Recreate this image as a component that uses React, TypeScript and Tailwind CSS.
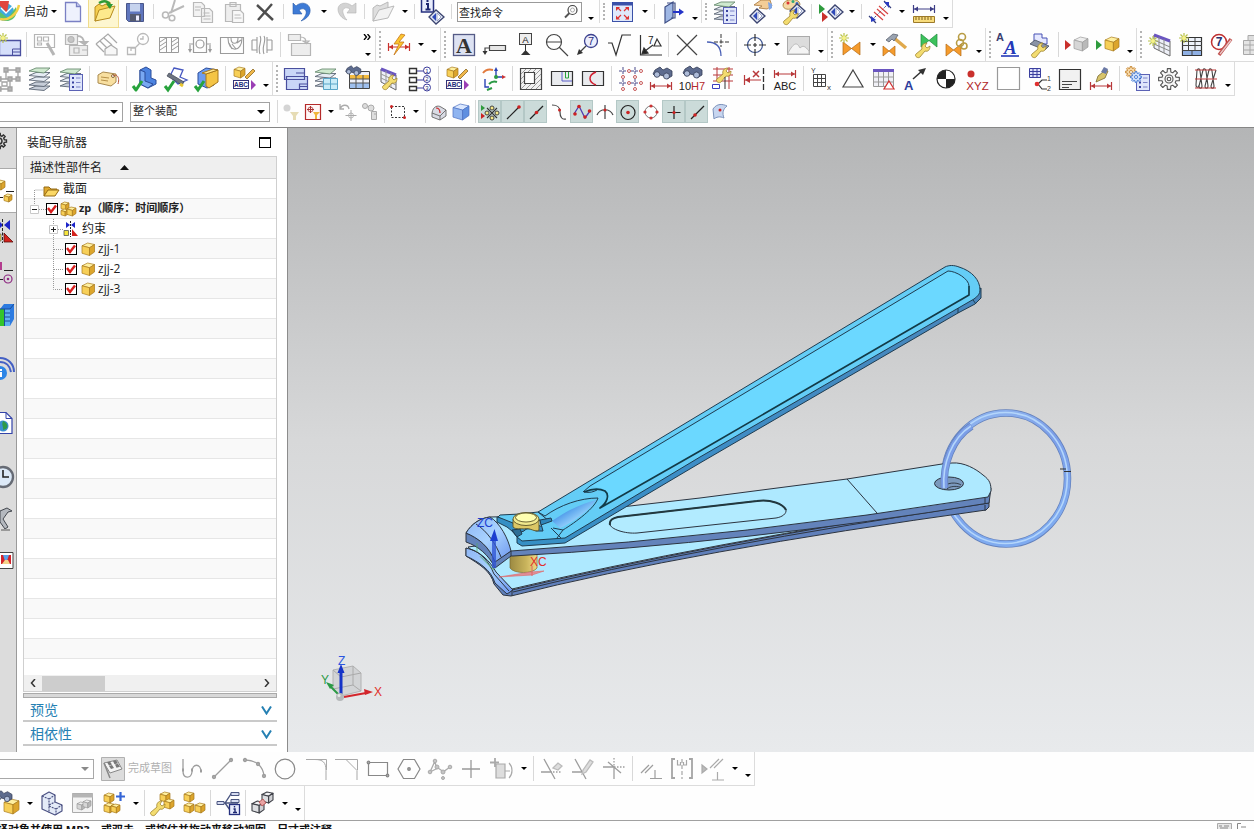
import React from "react";
import type { ReactNode } from "react";

/* ---------- small drawing parts ---------- */

type CubeProps = { x: number; y: number; s: number; tone?: "gold" | "grey" | "blue" | "wire" };
const TONES = {
  gold: ["#fff0a0", "#f7cf57", "#dca52c", "#a77a1c"],
  grey: ["#eeeeee", "#d6d6d6", "#b9b9b9", "#9b9b9b"],
  blue: ["#dbe8ff", "#8fb4f0", "#5f8fe0", "#4a6fc0"],
  wire: ["#f2f2f4", "#dedfe2", "#cfd0d4", "#3f4148"],
};
function Cube({ x, y, s, tone = "gold" }: CubeProps) {
  const [top, left, right, line] = TONES[tone];
  const p = (...n: number[]) => {
    const out: string[] = [];
    for (let i = 0; i < n.length; i += 2) out.push(`${x + n[i] * s},${y + n[i + 1] * s}`);
    return out.join(" ");
  };
  return (
    <g stroke={line} strokeWidth={tone === "wire" ? 1.1 : 0.7} strokeLinejoin="round">
      <polygon points={p(0, 0.22, 0.45, 0, 1, 0.12, 0.6, 0.38)} fill={top} />
      <polygon points={p(0, 0.22, 0.6, 0.38, 0.6, 1, 0, 0.82)} fill={left} />
      <polygon points={p(0.6, 0.38, 1, 0.12, 1, 0.72, 0.6, 1)} fill={right} />
    </g>
  );
}

/* closed outline of a toothed wheel */
function gearPath(cx: number, cy: number, outer: number, inner: number, teeth: number) {
  const step = (Math.PI * 2) / teeth;
  const pts: string[] = [];
  for (let i = 0; i < teeth; i++) {
    const a = i * step;
    [[-0.32, inner], [-0.2, outer], [0.2, outer], [0.32, inner]].forEach(([f, r]) => {
      pts.push(`${(cx + Math.cos(a + f * step) * r).toFixed(2)} ${(cy + Math.sin(a + f * step) * r).toFixed(2)}`);
    });
  }
  return `M${pts.join("L")}z`;
}

function Sparkle({ x, y }: { x: number; y: number }) {
  return (
    <g stroke="#b8c24a" strokeWidth="1.2">
      <path d={`M${x - 5} ${y}h10M${x} ${y - 5}v10M${x - 3.5} ${y - 3.5}l7 7M${x + 3.5} ${y - 3.5}l-7 7`} />
      <circle cx={x} cy={y} r="2" fill="#f6f28a" stroke="none" />
    </g>
  );
}

function Wrench({ x, y }: { x: number; y: number }) {
  return (
    <path
      transform={`translate(${x} ${y})`}
      d="M1 12l6-5c-1-3 1-6 5-6l-2 3 2 2 3-2c0 4-2 6-5 5l-5 6c-2 2-6-1-4-3z"
      fill="#f3dc70"
      stroke="#a08430"
      strokeWidth=".8"
    />
  );
}

function Tick({ x, y }: { x: number; y: number }) {
  return <path d={`M${x} ${y + 4}l3 4 6-9`} fill="none" stroke="#27a33c" strokeWidth="3" />;
}

function Sheets({ x, y }: { x: number; y: number }) {
  return (
    <g transform={`translate(${x} ${y})`} strokeWidth=".9" strokeLinejoin="round">
      <path d="M0 17l7-3h14l-6 4.500z" fill="#c6cdd8" stroke="#5c6675" />
      <path d="M0 12l7-3h14l-6 4.500z" fill="#e6ecf4" stroke="#5c6675" />
      <path d="M0 7.500l7-3h14l-6 4.500z" fill="#e6ecf4" stroke="#5c6675" />
      <path d="M0 3l7-3h14l-6 5z" fill="#cfe9cf" stroke="#6b8d73" />
    </g>
  );
}

function ListPad({ x, y }: { x: number; y: number }) {
  return (
    <g transform={`translate(${x} ${y})`}>
      <rect x=".5" y=".5" width="13" height="16" fill="#dfe6fb" stroke="#5b62b5" />
      <path d="M3 4h2M3 8.500h2M3 13h2" stroke="#3a43a0" strokeWidth="2" />
      <path d="M7 4h4.500M7 8.500h4.500M7 13h4.500" stroke="#7c84c8" />
    </g>
  );
}

function Binoculars({ x, y }: { x: number; y: number }) {
  return (
    <g transform={`translate(${x} ${y})`} stroke="#333c55" strokeWidth=".8">
      <path d="M2 3l5-3 3 3 4-2 5 3 0 5-5 3-3-3-4-1-4 2-3-3z" fill="#5d6b8e" />
      <circle cx="4" cy="7.500" r="2.800" fill="#aebcd8" />
      <circle cx="13.500" cy="9" r="3" fill="#aebcd8" />
    </g>
  );
}

function Diamond({ x, y }: { x: number; y: number }) {
  return (
    <g transform={`translate(${x} ${y})`}>
      <path d="M0 7L7 0l8 7-8 7z" fill="#e3e8f5" stroke="#3b4470" strokeWidth="1.300" />
      <path d="M7 3v8L3 7z" fill="#2e49b8" />
      <path d="M8 3v8l4-4z" fill="#fff" stroke="#7d88b5" strokeWidth=".7" />
    </g>
  );
}

function Bowtie({ x, y, w = 16, h = 14, c = "#f59b2c" }: { x: number; y: number; w?: number; h?: number; c?: string }) {
  return (
    <path
      d={`M${x} ${y}l${w} ${h}v${-h}l${-w} ${h}z`}
      fill={c}
      stroke={c === "#f59b2c" ? "#b56a16" : "#1f8a3d"}
      strokeWidth=".7"
    />
  );
}

function HDim({ y, c = "#b8383a" }: { y: number; c?: string }) {
  return (
    <g stroke={c} strokeWidth="1.200" fill={c}>
      <path d={`M3.500 ${y - 4}v8M24.500 ${y - 4}v8M4 ${y}h20`} />
      <path d={`M4 ${y}l4-2.500v5zM24 ${y}l-4-2.500v5z`} stroke="none" />
    </g>
  );
}

const sans = "Liberation Sans, Arial, sans-serif";
const serif = "Liberation Serif, Times New Roman, serif";

/* ---------- icon library, 28 x 28 grid ---------- */

const ICONS: Record<string, ReactNode> = {
  newFile: (
    <g stroke="#7a80c4" strokeWidth="1.300">
      <path d="M6.500 4.500h11l4 4v15h-15z" fill="#eef1fd" />
      <path d="M17.500 4.500v4h4" fill="#cfd5f3" />
    </g>
  ),
  openFile: (
    <g stroke="#b58a1e" strokeLinejoin="round">
      <path d="M5 23V9l4-3 3 2 8-4v14z" fill="#f5cf4f" />
      <path d="M5 23l4-11 16-4-5 12z" fill="#fdea8c" />
      <path d="M9 5c5-3 10-2 11 3" fill="none" stroke="#2f9a35" strokeWidth="2.500" />
      <path d="M16 6h7l-3 5z" fill="#2f9a35" stroke="none" />
    </g>
  ),
  save: (
    <g>
      <path d="M5.500 5.500h17v18h-15l-2-2z" fill="#5f76bd" stroke="#4a5688" />
      <path d="M9 5.500h10v8H9z" fill="#c6d3ee" />
      <path d="M9 16h11v7H9z" fill="#555b70" />
      <path d="M15 17.500h3v5h-3z" fill="#eef" />
    </g>
  ),
  cut: (
    <g fill="none" stroke="#b9b9b9" strokeWidth="1.600">
      <path d="M17 2l-4 13M26 8l-15 7" strokeWidth="2" />
      <circle cx="7.500" cy="17" r="3" />
      <circle cx="14" cy="20" r="2.800" />
    </g>
  ),
  copy: (
    <g fill="#f3f3f3" stroke="#b9b9b9" strokeWidth="1.200">
      <path d="M4.500 4.500h8l3 3v11h-11zM12.500 10.500h8l3 3v11h-11z" />
      <path d="M6 9h6M6 12h5M14.500 15h6M14.500 18h7M14.500 21h7" />
    </g>
  ),
  paste: (
    <g fill="#eee" stroke="#b9b9b9" strokeWidth="1.200">
      <path d="M5.500 6.500h15v17h-15zM10 4.500h6v4h-6z" />
      <path d="M12.500 12.500h8l3 3v9h-11z" fill="#f8f8f8" />
      <path d="M14.500 17h6M14.500 20h7" />
    </g>
  ),
  remove: <path d="M6 7l16 15M21 6L7 22" stroke="#4e4e4e" strokeWidth="2.400" />,
  undo: <path d="M5 5v11h9l-3-4c5-3 8 0 7 4-1 3-3 5-5 7 6-2 10-7 9-12C21 5 13 3 8 8z" fill="#3e7bd6" stroke="#2b5ca8" strokeWidth=".6" />,
  redo: <path d="M24 5v10h-9l3-4c-5-3-8 0-7 4 1 3 2 5 4 7-5-1-9-6-9-11C6 5 15 3 20 8z" fill="#d3d3d3" stroke="#b3b3b3" strokeWidth=".6" />,
  openGrey: (
    <g stroke="#b9b9b9" strokeLinejoin="round">
      <path d="M4 23V10l4-3 3 1 8-4v14z" fill="#dedede" />
      <path d="M4 23l6-11 15-4-6 12z" fill="#f2f2f2" />
    </g>
  ),
  infoDiamond: (
    <g>
      <rect x="2.500" y="0" width="12" height="14" fill="#e8ecfc" stroke="#26307f" strokeWidth="1.500" />
      <path d="M8.500 2v2M7 6h2v5M6.500 11.500h5" stroke="#1d2770" strokeWidth="2" fill="none" />
      <Diamond x={10} y={12} />
    </g>
  ),
  fullscreen: (
    <g>
      <rect x="3.500" y="4.500" width="20" height="19" fill="#dfe8fb" stroke="#3b51a8" />
      <path d="M4 6h19" stroke="#3b51a8" strokeWidth="3" />
      <path d="M12 13l-3-3M15 13l3-3M12 17l-3 3M15 17l3 3" stroke="#d33" strokeWidth="1.200" />
      <path d="M7 9h4l-4 4zM20 9h-4l4 4zM7 21.500h4l-4-4zM20 21.500h-4l4-4z" fill="#d33" />
    </g>
  ),
  door: (
    <g>
      <path d="M6 9l8-5v16l-8 5z" fill="#9fb7e4" stroke="#3f4f86" strokeWidth="1.200" />
      <path d="M8 5h8v15h-4" fill="none" stroke="#3f4f86" strokeWidth="1.200" />
      <path d="M14 14h7" stroke="#2434c8" strokeWidth="2" />
      <path d="M20 10.500l5 3.500-5 3.500z" fill="#2434c8" />
    </g>
  ),
  sheetsList: (
    <g>
      <Sheets x={3} y={4} />
      <ListPad x={12} y={9} />
    </g>
  ),
  sheets: (
    <g>
      <path d="M3 24l7-3h14l-6 4.500z" fill="#c6cdd8" stroke="#5c6675" strokeWidth=".9" />
      <Sheets x={3} y={3} />
    </g>
  ),
  sheetsGrid: (
    <g>
      <Sheets x={2} y={4} />
      <path d="M10.500 13.500h14v11h-14zM10.500 19h14M17.500 13.500v11" fill="#c9ecf8" stroke="#5aa5c7" />
    </g>
  ),
  handDiamond: (
    <g>
      <Diamond x={2} y={11} />
      <path d="M6 7l7-5h9l2 6-5 3-8-1 3-2z" fill="#f3cd97" stroke="#a6753a" strokeWidth=".8" />
      <path d="M20 4l4 2v4l-3 2z" fill="#7fa5e6" />
    </g>
  ),
  paletteWrench: (
    <g>
      <path d="M4 7c0-6 16-8 17-1 0 3-4 3-7 4-3 2-10 2-10-3z" fill="#f4d9a5" stroke="#a37b35" strokeWidth=".8" />
      <circle cx="9" cy="5" r="1.500" fill="#d33" />
      <circle cx="14" cy="3.500" r="1.500" fill="#3a7" />
      <circle cx="18" cy="5.500" r="1.500" fill="#36c" />
      <Diamond x={11} y={6} />
      <Wrench x={4} y={11} />
    </g>
  ),
  playDiamond: (
    <g>
      <path d="M3 6l6 5-6 5z" fill="#2e9b3d" />
      <path d="M6 14l6 5-6 5z" fill="#c9302c" />
      <Diamond x={12} y={7} />
    </g>
  ),
  measureTicks: (
    <g>
      <path d="M3 18l7 7M18 3l7 7" stroke="#333c7a" strokeWidth="1.200" />
      <path d="M6 22L22 6" stroke="#333c7a" strokeDasharray="2 1.500" />
      <path d="M8 14l9 8M11 11l8 7M13 8l9 8" stroke="#d84444" strokeWidth="1.200" />
      <path d="M5 18l5 4-5 2zM18 4l5 0v6z" fill="#2b3cc0" />
    </g>
  ),
  ruler: (
    <g>
      <HDim y={11} c="#3d3d86" />
      <path d="M3.500 18.500h21v6h-21z" fill="#f8dc7c" stroke="#9c7a2a" />
      <path d="M6 19v3M9 19v3M12 19v3M15 19v3M18 19v3M21 19v3" stroke="#7d5f1c" />
    </g>
  ),
  newSheet: (
    <g>
      <path d="M5.500 9.500h21v15h-21z" fill="#d6dffa" stroke="#4a4f9e" strokeWidth="1.300" />
      <path d="M18.500 24v-6h8M18.500 21h8" fill="none" stroke="#4a4f9e" />
      <Sparkle x={9} y={7} />
    </g>
  ),
  gridPointer: (
    <g fill="none" stroke="#b5b5b5" strokeWidth="1.200">
      <path d="M3.500 3.500h20v13h-20zM6.500 6h4v4h-4zM12.500 6h5v4h-5zM6.500 12h4v2h-4z" />
      <path d="M16 12l7 12" strokeWidth="3" />
    </g>
  ),
  viewShift: (
    <g fill="#ededed" stroke="#b5b5b5" strokeWidth="1.200">
      <path d="M3.500 3.500h12v10h-12zM7.500 14.500h18v10h-18z" />
      <path d="M12 17h5v5h-5zM20 19h5" />
      <path d="M15 5c5 0 7 2 7 8l-3-2h6l-3 3" fill="none" strokeWidth="2" />
      <circle cx="9" cy="8.500" r="3" fill="#c6c6c6" />
    </g>
  ),
  stairs: (
    <g fill="none" stroke="#a9a9a9" strokeWidth="1.200">
      <path d="M3 13l12-10 9 9M3 13l8 8M7 10l8 8M11 7l8 7" />
      <path d="M12 24v-6l6-4 6 4v6z" fill="#f7f7f7" />
    </g>
  ),
  detail: (
    <g fill="none" stroke="#b9b9b9" strokeWidth="1.300">
      <circle cx="19" cy="8" r="5.500" />
      <path d="M3.500 16.500h8v7h-8zM19 5v3h-3M7 20v-3h4M12 16l4-4" />
    </g>
  ),
  section: (
    <g fill="none" stroke="#9b9b9b">
      <path d="M4.500 6.500h19v15h-19zM11.500 6.500v15M16.500 6.500v15" />
      <path d="M5 11l6-4M5 15l6-4M5 19l6-4M17 11l6-4M17 15l6-4M17 19l6-4" />
    </g>
  ),
  sectionCut: (
    <g fill="none" stroke="#9b9b9b" strokeWidth="1.200">
      <path d="M7.500 6.500h13v15h-13zM3 13h4M21 13h4M4 14v6M24 14v6" />
      <circle cx="14" cy="13" r="4" />
      <path d="M2 18l2 4 2-4zM22 18l2 4 2-4z" fill="#9b9b9b" stroke="none" />
    </g>
  ),
  sectionHalf: (
    <g fill="none" stroke="#9b9b9b" strokeWidth="1.100">
      <path d="M3.500 6.500h23v16h-23z" />
      <path d="M11 7c0 15 14 15 14 0M14 7c0 7 7 7 7 0M12 12l3 6M15 13l4 5M20 12l4-3" />
    </g>
  ),
  sectionBreak: (
    <g fill="none" stroke="#9b9b9b" strokeWidth="1.100">
      <path d="M9 6v16M4 9v10h5M4 9h5M19 6v16M24 9v10h-5M24 9h-5" />
      <path d="M12 5c3 5-3 10 0 18M16 5c3 5-3 10 0 18" />
    </g>
  ),
  viewMove: (
    <g fill="#ededed" stroke="#b5b5b5" strokeWidth="1.200">
      <path d="M3.500 3.500h12v6h-12zM6.500 12.500h19v12h-19z" />
      <path d="M15 6c5 0 6 2 6 6l-3-2h6l-3 3" fill="none" />
    </g>
  ),
  quickDim: (
    <g>
      <HDim y={16} c="#c9302c" />
      <path d="M16 3L9 13h5l-5 11 10-13h-5l6-7z" fill="#fbc52f" stroke="#c7761b" strokeWidth=".8" />
    </g>
  ),
  textA: (
    <g>
      <rect x="3.500" y="3.500" width="21" height="21" fill="#dde2f2" stroke="#555b86" strokeWidth="1.300" />
      <text x="14" y="21.500" fontFamily={serif} fontWeight="700" fontSize="22" textAnchor="middle" fill="#333">A</text>
    </g>
  ),
  leaderBox: (
    <g fill="none" stroke="#444" strokeWidth="1.200">
      <path d="M8.500 14.500h16v5h-16z" fill="#e6e6e6" />
      <path d="M8 17H4v4" />
      <path d="M1.500 20h5L4 24z" fill="#333" stroke="none" />
    </g>
  ),
  datumA: (
    <g>
      <rect x="7.500" y="2.500" width="12" height="11" fill="#eee" stroke="#444" />
      <text x="13.500" y="11.500" fontFamily={sans} fontSize="9.500" textAnchor="middle" fill="#222">A</text>
      <path d="M13.500 14v6" stroke="#333" />
      <path d="M9 24l4.500-5 5 5z" fill="#333" />
    </g>
  ),
  balloonLine: (
    <g fill="none" stroke="#444" strokeWidth="1.200">
      <circle cx="11" cy="11" r="7.500" />
      <path d="M3.500 11h15M16 16l9 9" />
    </g>
  ),
  balloon7: (
    <g>
      <circle cx="17" cy="10" r="6.500" fill="#eceefc" stroke="#3b418f" strokeWidth="1.300" />
      <text x="17" y="14" fontFamily={sans} fontSize="11" textAnchor="middle" fill="#2a3080">7</text>
      <path d="M12 15l-6 6" stroke="#444" strokeWidth="1.300" />
      <path d="M3 24l2-6 4 4z" fill="#333" />
    </g>
  ),
  surface: <path d="M3 12h4l4 12 6-20h9" fill="none" stroke="#333" strokeWidth="1.200" />,
  angle7: (
    <g fill="none" stroke="#333" strokeWidth="1.200">
      <path d="M4.500 4v20H26M17 14L9 20M21 8l4 7h-7z" />
      <path d="M6 23l2-6 4 5z" fill="#222" />
      <text x="12" y="13" fontFamily={sans} fontSize="10" fill="#222" stroke="none">7</text>
    </g>
  ),
  cross: <path d="M4 4l20 20M24 4L4 24" stroke="#444" strokeWidth="1.200" />,
  curveCross: (
    <g fill="none">
      <path d="M3 11c9 0 14 5 14 14" stroke="#4a60b5" strokeWidth="1.300" />
      <path d="M17 3v13M10 11h15" stroke="#333" strokeDasharray="4 1.500" />
    </g>
  ),
  target: (
    <g fill="none" strokeWidth="1.200">
      <circle cx="14" cy="14" r="7.500" stroke="#39518f" />
      <path d="M14 3v22M3 14h22" stroke="#333" strokeDasharray="7 2 4 2" />
    </g>
  ),
  image: (
    <g>
      <rect x="2.500" y="5.500" width="22" height="18" fill="#dcdcdc" stroke="#aaa" />
      <path d="M3 22c6-11 9-11 12-5 3-3 5-2 9 3v3H3z" fill="#f4f4f4" stroke="#bbb" />
    </g>
  ),
  tieNew: (
    <g>
      <Bowtie x={6} y={11} w={17} h={13} />
      <Sparkle x={7} y={7} />
    </g>
  ),
  tieHammer: (
    <g>
      <Bowtie x={2} y={15} w={12} h={10} c="#f59b2c" />
      <path d="M13 7l12 10" stroke="#e0a94c" strokeWidth="3.500" />
      <path d="M5 9l7-6 5 1-4 6-2-2-3 3z" fill="#9aa3b0" stroke="#5a6270" strokeWidth=".8" />
    </g>
  ),
  tieWrench: (
    <g>
      <Bowtie x={9} y={3} w={16} h={13} c="#3cc25c" />
      <Wrench x={3} y={11} />
    </g>
  ),
  tieLinks: (
    <g>
      <Bowtie x={3} y={13} w={15} h={12} />
      <g fill="none" stroke="#b89c44" strokeWidth="1.600">
        <circle cx="19" cy="6" r="3.500" />
        <circle cx="17" cy="12" r="3.500" />
        <circle cx="21" cy="15" r="3" />
      </g>
    </g>
  ),
  styleA: (
    <g>
      <text x="1" y="10" fontFamily={sans} fontSize="11" fontWeight="700" fill="#3b4070">A</text>
      <text x="9" y="23" fontFamily={serif} fontStyle="italic" fontSize="19" fontWeight="700" fill="#2338b8">A</text>
      <path d="M6 25h18" stroke="#2338b8" strokeWidth="1.600" />
    </g>
  ),
  styleWrench: (
    <g>
      <path d="M8 3h8v4h5v6H8z" fill="#e5e8ff" stroke="#4853b5" />
      <path d="M4 13l5-4 14 6-4 4z" fill="#8a93a5" stroke="#454c5c" strokeWidth=".8" />
      <Wrench x={5} y={11} />
    </g>
  ),
  greyPlay: (
    <g>
      <path d="M2 9l6 5-6 5z" fill="#c9302c" />
      <Cube x={11} y={6} s={14} tone="grey" />
    </g>
  ),
  goldPlay: (
    <g>
      <path d="M2 9l6 5-6 5z" fill="#2e9b3d" />
      <Cube x={11} y={6} s={14} />
    </g>
  ),
  tableNew: (
    <g>
      <path d="M8 4l16 6v15L8 17z" fill="#eef0f8" stroke="#666" />
      <path d="M8 4l16 6" stroke="#6a55c0" strokeWidth="3" />
      <path d="M8 9l16 7M8 13l16 7M13 6v14M18 8v14" stroke="#888" />
      <Sparkle x={7} y={10} />
    </g>
  ),
  partsList: (
    <g>
      <path d="M5.500 6.500h19v18h-19z" fill="#eef3fb" stroke="#333" strokeWidth="1.200" />
      <path d="M6 19h18v5H6z" fill="#8fb0e4" />
      <path d="M5 10.500h20M5 14.500h20M5 19.500h20M11.500 7v12M18 7v12M15 19v5" stroke="#444" />
      <Sparkle x={7} y={7} />
    </g>
  ),
  balloonPen: (
    <g>
      <circle cx="11" cy="11" r="7.500" fill="#fff" stroke="#c03030" strokeWidth="1.500" />
      <text x="11" y="15" fontFamily={sans} fontSize="12" fontWeight="700" textAnchor="middle" fill="#27306f">7</text>
      <path d="M11 24l12-16" stroke="#c0504d" strokeWidth="3.500" />
      <path d="M12 23l11-14" stroke="#e8c9c9" strokeWidth="1.300" />
    </g>
  ),
  tableGrey: (
    <g>
      <path d="M4.500 9.500h20v14h-20zM4 14h20M4 19h20M11 9v14M18 9v14" fill="#e4e4e4" stroke="#a8a8a8" />
      <path d="M9 4.500h10v5H9z" fill="#ddd" stroke="#aaa" />
    </g>
  ),
  nodes: (
    <g fill="none" stroke="#a3a3a3" strokeWidth="1.300">
      <path d="M4 14h11v10H4zM11 5h12v9H11z" />
      <path d="M2 12h4v4H2zM13 12h4v4h-4zM2 22h4v4H2zM13 22h4v4h-4zM9 3h4v4H9zM21 3h4v4h-4zM21 12h4v4h-4z" fill="#b2b2b2" />
      <path d="M7 17h5v4H7z" fill="#fff" />
    </g>
  ),
  tag: (
    <g>
      <path d="M4 10l5-3 13 2v8l-5 4-13-3z" fill="#f8dfa0" stroke="#a98a4f" />
      <path d="M7 12l8 1M7 15l7 1" stroke="#b69048" />
      <circle cx="19" cy="11" r="1.500" fill="#fff" stroke="#8a6a3a" />
      <path d="M19 11c4-3 7 2 5 8" fill="none" stroke="#b8533a" />
    </g>
  ),
  blueBlock: (
    <g stroke="#2b4c9a" strokeLinejoin="round">
      <path d="M9 5l6-3 5 3v8l5 2v4l-8 4-8-4z" fill="#4c83e0" />
      <path d="M9 5l5 2v9l8 3-5 4-8-4z" fill="#79a8f2" />
      <Tick x={2} y={17} />
    </g>
  ),
  sketchTick: (
    <g>
      <path d="M12 3l9 2-3 7 7 3-9 4-8-8z" fill="#fff" stroke="#4657c0" strokeWidth="1.300" />
      <path d="M7 8l15 9-2 3L5 11z" fill="#6d7480" stroke="#3c4250" strokeWidth=".7" />
      <path d="M18 19l3 2" stroke="#e8c531" strokeWidth="3" />
      <Tick x={3} y={17} />
    </g>
  ),
  assemblyTick: (
    <g stroke="#2b4c9a">
      <path d="M5 8l8-5 12 2-4 3v12l-7 3-9-4z" fill="#6d9cf0" />
      <path d="M13 9l12-4v12l-9 6-3-2z" fill="#f4c445" stroke="#a8791c" />
      <path d="M13 9l12-4-5-1-11 4z" fill="#ffe68e" stroke="#a8791c" />
      <Tick x={2} y={17} />
    </g>
  ),
  abcCube: (
    <g>
      <Cube x={4} y={2} s={11} />
      <path d="M15 12l8-8 2 2-8 8z" fill="#f0b74a" stroke="#8d6a23" strokeWidth=".8" />
      <rect x="3.500" y="15.500" width="15" height="8" fill="#fff" stroke="#34347a" />
      <text x="11" y="22" fontFamily={sans} fontSize="6.500" fontWeight="700" textAnchor="middle" fill="#222b7a">ABC</text>
      <path d="M21 15l5 5-5 5z" fill="#9b3fb5" />
    </g>
  ),
  twoSheets: (
    <g fill="#c9d6f7" stroke="#4a4f9e" strokeWidth="1.200">
      <path d="M2.500 3.500h20v11h-20zM4.500 11.500h21v13h-21z" />
      <path d="M17.500 24v-5h8M17.500 21.500h8M14 8h8" fill="none" />
    </g>
  ),
  findTable: (
    <g>
      <path d="M5.500 6.500h20v17h-20z" fill="#eef0f8" stroke="#444" />
      <path d="M6 10h19v4H6z" fill="#f5bb3f" />
      <path d="M6 18h19v5H6z" fill="#9fc0ee" />
      <path d="M5 14h20M5 18h20M12 10v13M19 10v13" stroke="#555" />
      <g transform="scale(.8)"><Binoculars x={2} y={1} /></g>
    </g>
  ),
  tableWrench: (
    <g>
      <path d="M6 4l15 6v15L6 17z" fill="#eef0f8" stroke="#666" />
      <path d="M6 4l15 6" stroke="#6a55c0" strokeWidth="3" />
      <path d="M6 9l15 7M6 13l15 7M11 6v14M16 8v14" stroke="#999" />
      <Wrench x={7} y={9} />
    </g>
  ),
  boxesNumbers: (
    <g fill="#fff" stroke="#333">
      <path d="M3.500 3.500h7v5h-7zM3.500 12.500h7v5h-7zM3.500 21.500h7v4h-7z" strokeWidth="1.400" />
      <path d="M11 6h7M11 15h7M11 23h7" stroke="#3b3b9a" />
      <g stroke="#3b3b9a">
        <circle cx="21" cy="5.500" r="3.500" />
        <circle cx="21" cy="14" r="3.500" />
        <circle cx="21" cy="22.500" r="3.500" />
      </g>
      <g stroke="none" fill="#222b7a" fontFamily={sans} fontSize="6" textAnchor="middle">
        <text x="21" y="8">1</text>
        <text x="21" y="16">2</text>
        <text x="21" y="24.500">3</text>
      </g>
    </g>
  ),
  axes: (
    <g fill="none" strokeWidth="1.400">
      <path d="M16 4v8h8" stroke="#2b44b5" />
      <path d="M22 10l4 2-4 2z" fill="#c33" stroke="none" />
      <path d="M14 6l2-4 2 4z" fill="#2b44b5" stroke="none" />
      <path d="M5 14v8h4" stroke="#2b44b5" />
      <path d="M9 19c3-3 5-3 8-2M7 25l5-2" stroke="#2b9a45" strokeWidth="2" />
      <path d="M3 8c3-4 6-4 10-3" stroke="#e27b3e" strokeWidth="2" />
      <circle cx="16" cy="12" r="2" fill="#2b9a45" stroke="none" />
    </g>
  ),
  hatch: (
    <g fill="none" stroke="#444" strokeWidth="1.200">
      <path d="M3.500 3.500h21v21h-21z" fill="#f2f2f2" />
      <path d="M4 9l5-5M4 14L14 4M4 19L19 4M4 24L24 4M9 24L24 9M14 24l10-10M19 24l5-5" stroke="#999" strokeWidth="1" />
      <path d="M7.500 7.500h10v11h-10z" fill="#fff" />
    </g>
  ),
  regionGreen: (
    <g>
      <path d="M3.500 6.500h21v14h-21z" fill="#e9ebee" stroke="#333" strokeWidth="1.200" />
      <path d="M14 7v9h10" fill="none" stroke="#5a5fc8" />
      <path d="M17.500 7v6h3V7" fill="none" stroke="#27a33c" />
    </g>
  ),
  regionRed: (
    <g>
      <path d="M3.500 6.500h21v14h-21z" fill="#e9ebee" stroke="#333" strokeWidth="1.200" />
      <path d="M17 7c-8 3-8 10 0 13" fill="none" stroke="#d02030" strokeWidth="1.500" />
    </g>
  ),
  crossHoles: (
    <g fill="none">
      <path d="M7 2v7M3 6h8M19 2v7M15 6h8M7 14v8M3 18h8M19 14v8M15 18h8" stroke="#4b4b8a" strokeDasharray="3 1" />
      <g stroke="#c85a5a">
        <circle cx="13" cy="6" r="1.500" />
        <circle cx="25" cy="6" r="1.500" />
        <circle cx="7" cy="12" r="1.500" />
        <circle cx="19" cy="12" r="1.500" />
        <circle cx="13" cy="18" r="1.500" />
        <circle cx="25" cy="18" r="1.500" />
        <circle cx="7" cy="24" r="1.500" />
        <circle cx="19" cy="24" r="1.500" />
      </g>
    </g>
  ),
  findDim: (
    <g>
      <Binoculars x={6} y={2} />
      <HDim y={21} />
    </g>
  ),
  find10H7: (
    <g>
      <Binoculars x={5} y={1} />
      <text x="14" y="25" fontFamily={sans} fontSize="11" textAnchor="middle" fill="#222">
        10<tspan fill="#b52a2c">H7</tspan>
      </text>
    </g>
  ),
  dimWrench: (
    <g>
      <path d="M4 4h20M4 10h20M4 16h20M8 2v14M20 2v22" stroke="#b8383a" fill="none" />
      <Wrench x={7} y={2} />
      <path d="M3.500 19.500h7v4h-7z" fill="#fff" stroke="#3a3fc0" />
      <path d="M16 12v12" stroke="#333" />
    </g>
  ),
  dimX: (
    <g>
      <path d="M4.500 10v10M5 15h16" stroke="#b8383a" strokeWidth="1.200" />
      <path d="M5 15l5-3v6z" fill="#b8383a" />
      <path d="M23.500 3v22" stroke="#333" strokeWidth="1.300" strokeDasharray="6 2" />
      <path d="M13 6l6 6M19 6l-6 6" stroke="#b8383a" strokeWidth="1.500" />
    </g>
  ),
  dimABC: (
    <g>
      <HDim y={9} />
      <text x="14" y="25" fontFamily={sans} fontSize="11" textAnchor="middle" fill="#222">ABC</text>
    </g>
  ),
  gridYX: (
    <g>
      <path d="M5.500 9.500h12v12h-12zM9.500 9v13M13.500 9v13M5 13.500h13M5 17.500h13" fill="none" stroke="#444" />
      <text x="3" y="8" fontFamily={sans} fontSize="7" fill="#333">Y</text>
      <text x="19" y="25" fontFamily={sans} fontSize="8" fill="#333">x</text>
    </g>
  ),
  triangle: <path d="M14 5L24 22H4z" fill="none" stroke="#444" strokeWidth="1.200" />,
  tableTriangle: (
    <g>
      <path d="M3.500 5.500h20v16h-20zM3 12h20M3 17h20M8.500 7v14M13.500 7v14M18.500 7v14" fill="#f0f0f6" stroke="#999" />
      <path d="M3 5.500h21" stroke="#6a55c0" strokeWidth="3" />
      <path d="M19 16l5 8H14z" fill="#fff" stroke="#d03030" strokeWidth="1.200" />
    </g>
  ),
  arrowA: (
    <g>
      <text x="3" y="25" fontFamily={sans} fontSize="13" fontWeight="700" fill="#2e3d9c">A</text>
      <path d="M12 14l9-8" stroke="#333" strokeWidth="1.500" />
      <path d="M25 3l-3 7-5-5z" fill="#333" />
    </g>
  ),
  quadrant: (
    <g>
      <circle cx="14" cy="14" r="9" fill="#fff" stroke="#222" strokeWidth="1.200" />
      <path d="M14 14V5a9 9 0 0 0-9 9zM14 14v9a9 9 0 0 0 9-9z" fill="#222" />
    </g>
  ),
  xyz: (
    <g>
      <circle cx="8" cy="9" r="3.500" fill="#c9302c" />
      <text x="14.500" y="25" fontFamily={sans} fontSize="11.500" textAnchor="middle" fill="#b02426">XYZ</text>
    </g>
  ),
  blank: <path d="M3.500 2.500h22v22h-22z" fill="#fff" stroke="#999" strokeWidth="1.200" />,
  tableBranch: (
    <g>
      <path d="M4.500 3.500h11v9h-11zM4 6.500h11M4 9.500h11M8 3v9M12 3v9" fill="#dfe2fb" stroke="#3a3f9e" />
      <path d="M13 19l4-4h5M13 19l4 5h5" fill="none" stroke="#333" strokeWidth="1.200" />
      <circle cx="12" cy="19" r="2.300" fill="#e03030" />
      <text x="22" y="16" fontFamily={sans} fontSize="7" fill="#333">1</text>
      <text x="22" y="26" fontFamily={sans} fontSize="7" fill="#333">2</text>
    </g>
  ),
  note: (
    <g>
      <path d="M3.500 4.500h21v20h-21z" fill="#f1f1f1" stroke="#333" strokeWidth="1.200" />
      <path d="M6 16.500h15M6 19.500h10M6 22.500h7" stroke="#444" />
    </g>
  ),
  brushDim: (
    <g>
      <HDim y={21} />
      <path d="M17 4l4 2-3 7-9 4 2-6 5-4z" fill="#d8c46a" stroke="#7a6a30" strokeWidth=".8" />
      <path d="M17 2l4 2-2 5-5-2z" fill="#6b79a5" />
    </g>
  ),
  gearsList: (
    <g>
      <path d={gearPath(7, 7, 5.5, 4, 8)} fill="#f6d8a8" stroke="#c98a36" />
      <circle cx="7" cy="7" r="1.500" fill="#fff" stroke="#c98a36" />
      <ListPad x={12} y={9} />
      <path d={gearPath(12, 12, 5.5, 4, 8)} fill="#cfe0fb" stroke="#4a7ed6" />
      <circle cx="12" cy="12" r="1.500" fill="#fff" stroke="#4a7ed6" />
    </g>
  ),
  gear: (
    <g fill="#f7f7f7" stroke="#555" strokeWidth="1.100" strokeLinejoin="round">
      <path d={gearPath(14, 14, 10.5, 7.2, 8)} />
      <circle cx="14" cy="14" r="4" />
      <circle cx="14" cy="14" r="1.800" />
    </g>
  ),
  coil: (
    <g fill="none">
      <path
        d="M5 5c2-2 3-1 3 1l2 15c0 3-3 3-3 0l4-16c1-2 3-1 3 1l2 15c0 3-3 3-3 0l4-16c1-2 3-1 3 1l2 15c0 3-3 3-3 0l5-16M5 5l-1 15c0 3 3 3 3 0"
        stroke="#444"
        strokeWidth="1.100"
      />
      <path d="M3 5h21M3 14h22M3 23h21" stroke="#c03a3a" strokeWidth="1.200" />
    </g>
  ),
};

/* 22 x 22 grid, used by the selection bar */
const SMALL: Record<string, ReactNode> = {
  filterFaint: (
    <g fill="#d4d4d4">
      <circle cx="7" cy="7" r="3.500" />
      <path d="M10 11h9l-3 4v4h-3v-4z" fill="#e6dcb5" />
    </g>
  ),
  filterRed: (
    <g>
      <path d="M3.500 3.500h15v15h-15z" fill="#fff6f6" stroke="#b52a2a" strokeWidth="1.200" />
      <path d="M8.500 5v7M5 8.500h7" stroke="#a33" />
      <circle cx="8.500" cy="8.500" r="2.500" fill="none" stroke="#a33" strokeWidth=".8" />
      <path d="M11 11h7l-3 3v4h-2v-4z" fill="#f1b43b" />
    </g>
  ),
  faintUndo: (
    <g fill="none" stroke="#aaa" strokeWidth="1.300">
      <path d="M3 8c2-5 8-5 9 0M3 3v5h4" />
      <path d="M14 9v11M8.500 14.500h11" strokeWidth="1" />
      <circle cx="14" cy="14.500" r="2.500" strokeWidth=".8" />
    </g>
  ),
  faintSteps: (
    <g fill="#ddd" stroke="#aaa">
      <circle cx="6" cy="5" r="2.500" />
      <circle cx="12" cy="7" r="3" />
      <path d="M12.500 10.500h5v8h-5zM15 13h3" />
    </g>
  ),
  rectSelect: (
    <g>
      <path d="M4.500 5.500h13v11h-13z" fill="none" stroke="#333" strokeDasharray="2 1.500" />
      <circle cx="4.500" cy="5.500" r="1.500" fill="#c22" />
      <circle cx="17.500" cy="16.500" r="1.500" fill="#c22" />
    </g>
  ),
  dome: (
    <g stroke="#666" strokeWidth=".9">
      <path d="M4 12c1-7 6-8 9-6l5 3v6l-6 4-8-3z" fill="#d9dbe4" />
      <path d="M4 12l8 3 6-6M12 15v4" fill="none" />
      <path d="M8 7c3 0 4 2 4 5" stroke="#c22" strokeWidth="1.200" fill="none" />
    </g>
  ),
  glassCube: <Cube x={3} y={3} s={16} tone="blue" />,
  moveAll: (
    <g>
      <path d="M2 4l4 3-4 3zM2 4" fill="#2e9b3d" />
      <path d="M2 12l4 3-4 3z" fill="#c22" />
      <path d="M8 7l10 10M18 7L8 17" stroke="#333" strokeWidth="1.100" />
      <g fill="#f7e98a" stroke="#333" strokeWidth=".9">
        <circle cx="13" cy="7" r="2" />
        <circle cx="13" cy="17" r="2" />
        <circle cx="8" cy="12" r="2" />
        <circle cx="18" cy="12" r="2" />
      </g>
    </g>
  ),
  endPoint: (
    <g>
      <path d="M5 18L17 6" stroke="#222" strokeWidth="1.200" />
      <circle cx="17" cy="6" r="1.800" fill="#c22" />
    </g>
  ),
  midPoint: (
    <g>
      <path d="M5 18L18 5" stroke="#222" strokeWidth="1.200" />
      <circle cx="11.500" cy="11.500" r="1.800" fill="#c22" />
    </g>
  ),
  spline: (
    <g>
      <path d="M4 4c6 0 8 2 8 7s2 8 6 7" fill="none" stroke="#444" strokeWidth="1.200" />
      <circle cx="11.500" cy="9" r="1.500" fill="#c22" />
    </g>
  ),
  poles: (
    <g>
      <path d="M3 13l5-8 6 12 5-7" fill="none" stroke="#4f3bb0" strokeWidth="1.300" />
      <g fill="#c22">
        <circle cx="4" cy="13" r="1.800" />
        <circle cx="8" cy="5.500" r="1.800" />
        <circle cx="14" cy="16" r="1.800" />
        <circle cx="18.500" cy="10" r="1.800" />
      </g>
    </g>
  ),
  intersect: (
    <g>
      <path d="M11 4v14M3 14c3-7 13-7 16 0" fill="none" stroke="#444" strokeWidth="1.200" />
      <circle cx="11" cy="9" r="1.500" fill="#c22" />
    </g>
  ),
  centre: (
    <g>
      <circle cx="11" cy="11.500" r="7" fill="none" stroke="#222" strokeWidth="1.200" />
      <circle cx="11" cy="11.500" r="1.800" fill="#c22" />
    </g>
  ),
  quadPoint: (
    <g>
      <circle cx="11" cy="11" r="6" fill="none" stroke="#777" />
      <g fill="#c33">
        <circle cx="11" cy="5" r="1.600" />
        <circle cx="11" cy="17" r="1.600" />
        <circle cx="5" cy="11" r="1.600" />
        <circle cx="17" cy="11" r="1.600" />
      </g>
    </g>
  ),
  plus: (
    <g>
      <path d="M11 5v13M4.500 11.500h13" stroke="#222" strokeWidth="1.200" />
      <circle cx="11" cy="11.500" r="1.600" fill="#c22" />
    </g>
  ),
  onCurve: (
    <g>
      <path d="M5 18L18 5" stroke="#222" strokeWidth="1.200" />
      <circle cx="9" cy="14" r="1.800" fill="#c22" />
    </g>
  ),
  onFace: (
    <g>
      <path d="M4 8c4-6 10-5 14-3-4 3-5 7-3 12-4-2-8-1-10 1z" fill="#c7d6f0" stroke="#7c92bb" />
      <circle cx="11" cy="9" r="1.500" fill="#c22" />
    </g>
  ),
};

/* greyed sketch tools and the assembly tools, 28 x 28 */
const LOWER: Record<string, ReactNode> = {
  flag: (
    <g>
      <path d="M2.500 2.500h23v23h-23z" fill="#dcdcdc" stroke="#b0b0b0" />
      <path d="M5 8l13-3 5 9-12 4z" fill="#f4f4f4" stroke="#888" />
      <path d="M8 7.300l3-.7 2 3-3 .8zM14 6l3-.7 2 3-3.500.9zM10 11l3-1 2 3-3 1zM16 9.500l3-.8 2 3-3.500 1z" fill="#777" />
      <path d="M5 8l6 15" stroke="#888" strokeWidth="1.500" />
    </g>
  ),
  profile: (
    <g fill="none" stroke="#9d9d9d" strokeWidth="1.300">
      <path d="M5 4v12c0 8 8 8 9 1 0-9 9-9 9 0" />
      <path d="M4 15h2M13 15h2M22 16h2" strokeWidth="3" />
    </g>
  ),
  line: (
    <g fill="#b0b0b0" stroke="#9d9d9d" strokeWidth="1.300">
      <path d="M5 22L22 5" />
      <circle cx="5" cy="22" r="1.500" />
      <circle cx="22" cy="5" r="1.500" />
    </g>
  ),
  arc: (
    <g fill="none" stroke="#9d9d9d" strokeWidth="1.300">
      <path d="M5 5c11 0 18 6 19 16" />
      <g fill="#b0b0b0">
        <circle cx="5" cy="5" r="1.500" />
        <circle cx="18" cy="9" r="1.500" />
        <circle cx="24" cy="21" r="1.500" />
      </g>
    </g>
  ),
  circle: <circle cx="14" cy="14" r="9.800" fill="none" stroke="#888" strokeWidth="1.200" />,
  fillet: <path d="M4 4.500h9c8 0 11 3 11 11V25M13 4.500h11.500V15" fill="none" stroke="#a8a8a8" />,
  chamfer: <path d="M2 4.500h11l11 11V25M13 4.500h11.500V15" fill="none" stroke="#a8a8a8" />,
  rect: (
    <g fill="none" stroke="#888" strokeWidth="1.200">
      <path d="M4.500 7.500h19v13h-19z" />
      <circle cx="4.500" cy="7.500" r="1.300" fill="#aaa" />
      <circle cx="23.500" cy="20.500" r="1.300" fill="#aaa" />
    </g>
  ),
  polygon: (
    <g fill="none" stroke="#888" strokeWidth="1.200">
      <path d="M8.500 4.500h11L25 14l-5.500 9.500h-11L3 14z" />
      <circle cx="14" cy="14" r="1.300" fill="#aaa" />
    </g>
  ),
  studio: (
    <g fill="#c4c4c4" stroke="#aaa">
      <path d="M4 17L9 6M9 6c1 9 4 6 8 11l7-5M4 17l8-4" fill="none" strokeWidth="1.300" />
      <circle cx="4" cy="17" r="1.800" />
      <circle cx="9" cy="6" r="1.800" />
      <circle cx="11" cy="12" r="2" />
      <circle cx="17" cy="17" r="2" />
      <circle cx="17" cy="23" r="1.500" />
      <circle cx="24" cy="12" r="1.800" />
    </g>
  ),
  point: <path d="M14 5v18M5 14h18" stroke="#999" strokeWidth="1.300" />,
  offset: (
    <g fill="#ddd" stroke="#aaa" strokeWidth="1.200">
      <path d="M7 3v9M2 7.500h9" strokeWidth="1.800" />
      <path d="M8 9h9v14H8z" />
      <path d="M21 8c4 4 4 11 0 15M17 16h5" fill="none" />
    </g>
  ),
  trim: (
    <g fill="none" stroke="#9d9d9d" strokeWidth="1.300">
      <path d="M3 17h11M6 4l11 20" />
      <path d="M15 17h9" strokeDasharray="1.500 1.500" />
      <path d="M15 13l5-5 4 3-4 4z" fill="#ddd" stroke="#bbb" />
    </g>
  ),
  extend: (
    <g fill="none" stroke="#9d9d9d" strokeWidth="1.300">
      <path d="M3 17h11M6 4l11 20" />
      <path d="M14 15l7-10 3 2-7 10-4 2z" fill="#ddd" stroke="#bbb" />
    </g>
  ),
  corner: (
    <g fill="none" stroke="#9d9d9d" strokeWidth="1.300">
      <path d="M3 12h11v12M8 7l13 11" />
      <path d="M14 3v9h11" strokeDasharray="1.500 1.500" />
    </g>
  ),
  constraints: <path d="M4 18l8-8M8 18l8-8M18 15v8M13 23.500h12" fill="none" stroke="#9d9d9d" strokeWidth="1.200" />,
  mirror: (
    <g fill="none" stroke="#a5a5a5" strokeWidth="1.200">
      <path d="M7 4H4v19h3M21 4h3v19h-3" strokeWidth="1.800" />
      <path d="M14 4v20" strokeDasharray="4 2" />
      <path d="M9.500 5v5h3V7M15.500 7v3h3V5" />
    </g>
  ),
  autoConstrain: (
    <g fill="none" stroke="#aaa" strokeWidth="1.200">
      <path d="M3 10l5 4-5 4z" fill="#bbb" />
      <path d="M11 13l9-9M15 13l9-9M18.500 17v8M13 25h12" />
    </g>
  ),
  findComponent: (
    <g>
      <Cube x={10} y={10} s={15} />
      <g transform="scale(.9)"><Binoculars x={1} y={2} /></g>
    </g>
  ),
  context: (
    <g fill="#e4ebf8" stroke="#4c5283" strokeWidth="1.200" strokeLinejoin="round">
      <path d="M4 7l7-4 6 3v7l7 3v6l-7 4-13-6z" />
      <path d="M4 7l7 3v14M11 10l6-4M11 16l6-3M11 17l7 3v6M18 20l6-4" strokeDasharray="2 1" fill="none" />
    </g>
  ),
  windowGrey: (
    <g>
      <path d="M3.500 4.500h20v19h-20z" fill="#f3f3f3" stroke="#aaa" />
      <path d="M3 6.500h21" stroke="#b5b5b5" strokeWidth="4" />
      <Cube x={8} y={13} s={8} tone="grey" />
      <Cube x={14} y={11} s={8} tone="grey" />
    </g>
  ),
  addComponent: (
    <g>
      <Cube x={4} y={4} s={10} />
      <Cube x={4} y={14} s={10} />
      <Cube x={11} y={15} s={9} />
      <path d="M20.500 3v9M16 7.500h9" stroke="#3565d6" strokeWidth="2.200" />
    </g>
  ),
  moveComponent: (
    <g>
      <Cube x={12} y={3} s={10} />
      <Cube x={16} y={10} s={10} />
      <Wrench x={2} y={11} />
    </g>
  ),
  cubes: (
    <g>
      <Cube x={5} y={3} s={10} />
      <Cube x={5} y={14} s={10} />
      <Cube x={16} y={14} s={10} />
    </g>
  ),
  treeInfo: (
    <g>
      <path d="M3 14h8l6-9h8M11 14h13M11 14l5 7" fill="none" stroke="#4a5580" strokeWidth="1.300" />
      <path d="M17 3.500h8v3h-8zM17 10.500h8v3h-8zM3 12.500h7v3H3z" fill="#d6dcf0" stroke="#4a5580" />
      <rect x="15.500" y="15.500" width="10" height="10" fill="#e8ecfc" stroke="#26307f" strokeWidth="1.300" />
      <path d="M20.500 17v1.500M19.500 20h1.500v3M19 23.500h4" stroke="#1d2770" strokeWidth="1.400" fill="none" />
    </g>
  ),
  clearance: (
    <g>
      <Cube x={13} y={3} s={11} tone="wire" />
      <Cube x={3} y={12} s={12} tone="wire" />
      <path d="M10 13l4-3 3 4-4 3z" fill="#e9a3a3" stroke="#b04a4a" strokeWidth=".8" />
    </g>
  ),
};

/* ---------- toolbar parts ---------- */

function Tool({ icon, label, active = false }: { icon: ReactNode; label: string; active?: boolean }) {
  return (
    <button
      type="button"
      aria-label={label}
      className={
        active
          ? "flex h-8 w-[31px] shrink-0 items-center justify-center border border-[#f0dc8c] bg-[#fdf6d0]"
          : "flex h-8 w-[31px] shrink-0 items-center justify-center"
      }
    >
      <svg viewBox="0 0 28 28" className="h-7 w-7 shrink-0" aria-hidden="true">
        {icon}
      </svg>
    </button>
  );
}

function SnapTool({ icon, label, wide, on = false }: { icon: ReactNode; label: string; wide?: boolean; on?: boolean }) {
  const base = "flex h-[23px] shrink-0 items-center justify-center ";
  return (
    <button
      type="button"
      aria-label={label}
      aria-pressed={on}
      className={base + (wide ? "w-[23px] " : "w-[22px] ") + (on ? "border border-[#b4c8c6] bg-[#cbdbd9]" : "")}
    >
      <svg viewBox="0 0 22 22" className="h-[22px] w-[22px] shrink-0" aria-hidden="true">
        {icon}
      </svg>
    </button>
  );
}

const Caret = ({ className = "fill-black" }: { className?: string }) => (
  <svg viewBox="0 0 6 3" className={"h-[3px] w-[6px] shrink-0 " + className} aria-hidden="true">
    <path d="M0 0h6L3 3z" />
  </svg>
);

/* the larger arrow inside drop-down boxes */
const BoxArrow = ({ className }: { className: string }) => (
  <svg viewBox="0 0 8 4" className={"pointer-events-none absolute top-2 right-[5px] h-1 w-2 " + className} aria-hidden="true">
    <path d="M0 0h8L4 4z" />
  </svg>
);

const Drop = ({ label }: { label: string }) => (
  <button type="button" aria-label={label + "选项"} className="flex h-7 w-[13px] shrink-0 items-center justify-center">
    <Caret />
  </button>
);

const More = ({ wide = false }: { wide?: boolean }) => (
  <button
    type="button"
    aria-label="工具条选项"
    className={wide ? "flex h-4 w-[17px] shrink-0 items-end justify-center self-center" : "flex h-4 w-[13px] shrink-0 items-end justify-center self-center"}
  >
    <Caret />
  </button>
);

const Sep = () => (
  <div className="flex w-[6px] shrink-0 justify-center self-stretch py-1">
    <div className="w-px bg-[#d8d8d8]" />
  </div>
);

const ThinSep = () => (
  <div className="flex w-1 shrink-0 justify-center self-stretch py-1">
    <div className="w-px bg-[#d8d8d8]" />
  </div>
);

const Grip = () => (
  <div className="flex w-2 shrink-0 justify-center self-stretch border-l border-[#dcdcdc] py-[3px]">
    <div className="w-0 border-l-2 border-dotted border-[#b4b4b4]" />
  </div>
);

const items = (lib: Record<string, ReactNode>, list: [string, string][]) =>
  list.map(([k, label]) => <Tool key={label} icon={lib[k]} label={label} />);

function StandardBar() {
  return (
    <div className="flex h-7 overflow-hidden">
      <div className="flex items-center border-r border-b border-[#dcdcdc] pb-1" role="toolbar" aria-label="标准">
        <button type="button" className="flex w-[57px] items-center gap-[3px]">
          <svg viewBox="0 0 21 24" className="h-6 w-[21px] shrink-0" aria-hidden="true">
            <circle cx="5" cy="12" r="9" fill="#3fa9dc" />
            <path d="M0 12l8 6 8-11c2 6-1 13-8 14-4 0-6-2-8-4z" fill="#5cc26c" />
            <path d="M0 1l9 0-2 12L0 6z" fill="#e0453d" />
            <path d="M0 19c8 2 17-4 19-14" fill="none" stroke="#f3cf45" strokeWidth="2.500" />
            <path d="M1 8l5 5 9-9" fill="none" stroke="#fff" strokeWidth="1.300" />
          </svg>
          <span className="shrink-0 text-xs leading-4 whitespace-nowrap">启动</span>
          <Caret />
        </button>
        <Tool icon={ICONS.newFile} label="新建" />
        <Tool icon={ICONS.openFile} label="打开" active />
        <Tool icon={ICONS.save} label="保存" />
        <Sep />
        {items(ICONS, [["cut", "剪切"], ["copy", "复制"], ["paste", "粘贴"], ["remove", "删除"]])}
        <Sep />
        <Tool icon={ICONS.undo} label="撤消" />
        <Drop label="撤消" />
        <Tool icon={ICONS.redo} label="重做" />
        <Sep />
        <Tool icon={ICONS.openGrey} label="最近打开" />
        <Drop label="最近打开" />
        <Sep />
        <Tool icon={ICONS.infoDiamond} label="命令信息" />
        <Sep />
        <label className="ml-[3px] flex h-5 w-[125px] items-center border border-[#9a9a9a] bg-white">
          <input
            type="text"
            aria-label="查找命令"
            defaultValue="查找命令"
            className="h-full w-0 min-w-0 flex-1 bg-transparent pl-px text-[11px] outline-none"
          />
          <svg viewBox="0 0 18 18" className="mr-px h-[18px] w-[18px]" aria-hidden="true">
            <circle cx="10.500" cy="7" r="4.500" fill="#fff" stroke="#444" strokeWidth="1.200" />
            <circle cx="10.500" cy="7" r="2" fill="none" stroke="#aaa" />
            <path d="M7.500 10L3 14.500" stroke="#555" strokeWidth="2" />
          </svg>
        </label>
        <More wide />
        <Grip />
        <Tool icon={ICONS.fullscreen} label="全屏" />
        <Drop label="全屏" />
        <Sep />
        <Tool icon={ICONS.door} label="退出" />
        <More />
        <Grip />
        <Tool icon={ICONS.sheetsList} label="图层设置" />
        <Sep />
        {items(ICONS, [["handDiamond", "触控"], ["paletteWrench", "定制"]])}
        <Sep />
        <Tool icon={ICONS.playDiamond} label="播放" />
        <Drop label="播放" />
        <Sep />
        <Tool icon={ICONS.measureTicks} label="测量" />
        <Drop label="测量" />
        <Tool icon={ICONS.ruler} label="测量距离" />
        <More />
      </div>
    </div>
  );
}

function DrawingBar() {
  return (
    <div className="flex h-[34px] overflow-hidden">
      <div className="-ml-2 flex shrink-0 items-center border-b border-[#dcdcdc]" role="toolbar" aria-label="图纸">
        <Tool icon={ICONS.newSheet} label="新建图纸页" />
        <Sep />
        {items(ICONS, [
          ["gridPointer", "视图创建向导"], ["viewShift", "基本视图"], ["stairs", "投影视图"], ["detail", "局部放大图"],
          ["section", "剖视图"], ["sectionCut", "截面线"], ["sectionHalf", "局部剖视图"], ["sectionBreak", "断开视图"],
        ])}
        <Sep />
        <Tool icon={ICONS.viewMove} label="更新视图" />
        <button type="button" aria-label="更多工具" className="flex h-[22px] w-[61px] flex-col items-end justify-between pr-1">
          <svg viewBox="0 0 8 6" className="h-[6px] w-2" aria-hidden="true">
            <path d="M1 0l2.500 3L1 6M4.500 0L7 3 4.500 6" fill="none" stroke="#000" strokeWidth="1.300" />
          </svg>
          <Caret />
        </button>
        <Grip />
        <Tool icon={ICONS.quickDim} label="快速尺寸" />
        <Drop label="快速尺寸" />
        <More />
        <Grip />
        {items(ICONS, [
          ["textA", "注释"], ["leaderBox", "特征控制框"], ["datumA", "基准特征符号"], ["balloonLine", "基准目标"],
          ["balloon7", "符号标注"], ["surface", "表面粗糙度符号"], ["angle7", "焊接符号"],
        ])}
        <Sep />
        {items(ICONS, [["cross", "目标点符号"], ["curveCross", "相交符号"]])}
        <Sep />
        <Tool icon={ICONS.target} label="中心标记" />
        <Drop label="中心标记" />
        <Tool icon={ICONS.image} label="图像" />
        <More />
        <Grip />
        <Tool icon={ICONS.tieNew} label="新建约束" />
        <Drop label="新建约束" />
        {items(ICONS, [["tieHammer", "编辑约束"], ["tieWrench", "修复约束"], ["tieLinks", "链接约束"]])}
        <More />
        <Grip />
        {items(ICONS, [["styleA", "编辑样式"], ["styleWrench", "编辑设置"]])}
        <Sep />
        {items(ICONS, [["greyPlay", "抑制"], ["goldPlay", "取消抑制"]])}
        <More />
        <Grip />
        {items(ICONS, [["tableNew", "表格注释"], ["partsList", "零件明细表"], ["balloonPen", "自动符号标注"], ["tableGrey", "编辑表格"]])}
      </div>
    </div>
  );
}

function AnnotationBar() {
  return (
    <div className="flex h-[34px] overflow-hidden">
      <div className="-ml-[7px] flex shrink-0 items-center border-r border-b border-[#dcdcdc]" role="toolbar" aria-label="注释">
        {items(ICONS, [["nodes", "布局"], ["sheets", "图层"], ["sheetsList", "图层类别"]])}
        <Sep />
        <Tool icon={ICONS.tag} label="属性" />
        <Sep />
        {items(ICONS, [["blueBlock", "检查零件"], ["sketchTick", "检查草图"], ["assemblyTick", "检查装配"]])}
        <Sep />
        <Tool icon={ICONS.abcCube} label="编辑部件名" />
        <More />
        <Grip />
        {items(ICONS, [["twoSheets", "图纸页"], ["sheetsGrid", "图层视图"], ["findTable", "查找表格"], ["tableWrench", "表格设置"], ["boxesNumbers", "装配编号"]])}
        <Sep />
        <Tool icon={ICONS.abcCube} label="部件文本" />
        <Sep />
        <Tool icon={ICONS.axes} label="坐标转换" />
        <Sep />
        {items(ICONS, [["hatch", "剖面线"], ["regionGreen", "区域"], ["regionRed", "边界"]])}
        <Sep />
        {items(ICONS, [["crossHoles", "孔中心"], ["findDim", "查找尺寸"], ["find10H7", "查找公差"], ["dimWrench", "尺寸设置"], ["dimX", "删除尺寸"], ["dimABC", "尺寸文本"]])}
        <Sep />
        {items(ICONS, [
          ["gridYX", "栅格"], ["triangle", "三角符号"], ["tableTriangle", "表格符号"], ["arrowA", "方向箭头"], ["quadrant", "重心"],
          ["xyz", "坐标"], ["blank", "空白框"], ["tableBranch", "分支表"], ["note", "技术要求"], ["brushDim", "尺寸样式"],
        ])}
        <Sep />
        {items(ICONS, [["gearsList", "工具列表"], ["gear", "设置"]])}
        <Sep />
        <Tool icon={ICONS.coil} label="弹簧" />
        <More />
      </div>
    </div>
  );
}

const snaps: [string, string, boolean][] = [
  ["moveAll", "启用捕捉点", true], ["endPoint", "端点", true], ["midPoint", "中点", true], ["spline", "控制点", false],
  ["poles", "极点", true], ["intersect", "交点", false], ["centre", "圆弧中心", true], ["quadPoint", "象限点", false],
  ["plus", "现有点", true], ["onCurve", "曲线上的点", true], ["onFace", "面上的点", false],
];

function SelectionBar() {
  return (
    <div className="flex h-8 items-center overflow-hidden border-b border-[#868686]" role="toolbar" aria-label="选择">
      <div className="relative -ml-px h-5 w-[124px] shrink-0">
        <select aria-label="类型过滤器" className="block h-full w-full appearance-none border border-[#a2a2a2] bg-white text-xs outline-none">
          <option> </option>
        </select>
        <BoxArrow className="fill-black" />
      </div>
      <div className="relative ml-[7px] h-5 w-[140px] shrink-0">
        <select aria-label="选择范围" className="block h-full w-full appearance-none border border-[#a2a2a2] bg-white pl-[2px] text-[11px] outline-none">
          <option>整个装配</option>
        </select>
        <BoxArrow className="fill-black" />
      </div>
      <div className="ml-1 flex items-center self-stretch">
        <Sep />
        <SnapTool icon={SMALL.filterFaint} label="重置过滤器" />
        <SnapTool icon={SMALL.filterRed} label="过滤器" />
        <Drop label="过滤器" />
        <SnapTool icon={SMALL.faintUndo} label="恢复选择" />
        <SnapTool icon={SMALL.faintSteps} label="选择步骤" />
        <Sep />
        <SnapTool icon={SMALL.rectSelect} label="矩形选择" />
        <Drop label="矩形选择" />
        <Sep />
        <SnapTool icon={SMALL.dome} label="高亮隐藏边" />
        <SnapTool icon={SMALL.glassCube} label="着色" />
        <Sep />
        {snaps.map(([k, label, on]) => (
          <SnapTool key={k} icon={SMALL[k]} label={label} on={on} wide />
        ))}
      </div>
    </div>
  );
}

/* ---------- navigator ---------- */

function RailIcon({ label, gap, children }: { label: string; gap: "tight" | "loose"; children: ReactNode }) {
  return (
    <button type="button" aria-label={label} className={gap === "tight" ? "mt-[14px] block" : "mt-[26px] block"}>
      <svg viewBox="0 0 16 28" className="h-7 w-4" aria-hidden="true">
        {children}
      </svg>
    </button>
  );
}

function Rail() {
  return (
    <nav className="w-[17px] shrink-0 overflow-hidden border-r border-[#9a9a9a] bg-[#dcdcdc]" aria-label="资源条">
      <button type="button" aria-label="资源条选项" className="block h-10 w-4 pb-3">
        <svg viewBox="0 0 16 28" className="h-7 w-4" aria-hidden="true">
          <path d={gearPath(-1, 13, 7.5, 5.5, 8)} fill="#dcdcdc" stroke="#333" strokeWidth="1.500" />
          <circle cx="-1" cy="13" r="3" fill="none" stroke="#333" strokeWidth="1.500" />
        </svg>
      </button>
      <button type="button" aria-label="装配导航器" className="block h-[45px] w-[17px] border-y border-[#aaa] bg-white">
        <svg viewBox="0 0 16 28" className="h-7 w-4" aria-hidden="true">
          <Cube x={-5} y={3} s={10} />
          <path d="M6 14.500h8M0 20.500h3" stroke="#222" />
          <Cube x={4} y={17} s={8} />
        </svg>
      </button>
      <div className="-mt-2.5">
        <RailIcon label="约束导航器" gap="tight">
          <path d="M10 3v10L4 8zM-2 3l5 5-5 5z" fill="#1d25c8" />
          <path d="M2.500 2v24" stroke="#222" strokeDasharray="3 1.500" />
          <path d="M4 16v9h9z" fill="#d3221c" stroke="#5c0f0c" strokeWidth=".8" />
          <path d="M-1 17h2v7h-2z" fill="#f6e43c" stroke="#555" strokeWidth=".7" />
        </RailIcon>
        <RailIcon label="部件导航器" gap="tight">
          <path d="M-2 3h4v8h-4z" fill="#b33c8e" />
          <path d="M4 11.500h9M0 20.500h3" stroke="#222" />
          <circle cx="8" cy="20" r="4" fill="none" stroke="#8e2a82" strokeWidth="1.200" />
          <circle cx="8" cy="20" r="1.300" fill="#8e2a82" />
        </RailIcon>
        <RailIcon label="重用库" gap="tight">
          <path d="M0 8l4-5h10v15l-4 7H0z" fill="#2d7be0" />
          <path d="M0 8h4v17H0z" fill="#35c52b" />
          <path d="M5 8h5v17H5z" fill="#5fb0f2" />
          <path d="M5 12h5M5 16h5M5 20h5M4.500 8v17M0 8h10l4-5" stroke="#1a4d9a" fill="none" />
        </RailIcon>
        <RailIcon label="HD3D 工具" gap="loose">
          <circle cx="0" cy="18" r="7" fill="#2d86e6" />
          <path d="M0 7c6 0 10 4 11 10M0 3c8 0 14 6 14 14" fill="none" stroke="#4460c4" strokeWidth="2" />
          <path d="M1 14v2M1 17v5" stroke="#fff" strokeWidth="2" />
        </RailIcon>
        <RailIcon label="Web 浏览器" gap="loose">
          <path d="M-1 3.500h7l6 6v15H-1z" fill="#fff" stroke="#3444a8" strokeWidth="1.200" />
          <path d="M6 3.500v6h6" fill="none" stroke="#3444a8" />
          <circle cx="3" cy="17" r="5.500" fill="#3c8fd0" />
          <path d="M3 12c4 1 6 6 3 8l-3 1c1-3-2-5 0-9z" fill="#2f9a4a" />
        </RailIcon>
        <RailIcon label="历史记录" gap="loose">
          <circle cx="3" cy="14" r="10" fill="#dce9f7" stroke="#666b75" strokeWidth="2.300" />
          <path d="M3 7v7h6" fill="none" stroke="#222" strokeWidth="1.600" />
        </RailIcon>
        <RailIcon label="加工向导" gap="tight">
          <path d="M0 6l7-3 5 3-4 1-5 7 5 8-3 2-5-7z" fill="#b4b8be" stroke="#44484f" />
          <path d="M1 25h9" stroke="#999" strokeWidth="2" />
        </RailIcon>
        <RailIcon label="角色" gap="tight">
          <path d="M-1 5.500h14v16H-1z" fill="#fff" stroke="#444" />
          <path d="M1 8h10v9H1z" fill="#d2232a" />
          <path d="M3 8h6l-2 6H5z" fill="#5aa0ea" />
          <path d="M2 17l3-4h3l2 4z" fill="#f5d38a" />
        </RailIcon>
      </div>
    </nav>
  );
}

function RedCheck({ id, label }: { id: string; label: string }) {
  return (
    <span className="relative flex h-3 w-3 shrink-0">
      <input id={id} type="checkbox" aria-label={label} defaultChecked className="h-3 w-3 appearance-none border border-black bg-white" />
      <svg viewBox="0 0 12 12" className="pointer-events-none absolute inset-0 h-3 w-3" aria-hidden="true">
        <path d="M2 5l3 4 5-6.500" fill="none" stroke="#d81e1e" strokeWidth="2.400" />
      </svg>
    </span>
  );
}

const rowBase = "flex h-5 shrink-0 items-center border-b border-[#e6e6e6] text-xs ";
const plain = rowBase + "bg-white";
const tinted = rowBase + "bg-[#f9f9f9]";

function Navigator() {
  return (
    <section className="flex w-[271px] shrink-0 flex-col border-r border-[#8c8c8c] bg-white pr-[10px] pl-[6px]" aria-label="装配导航器">
      <header className="flex h-7 shrink-0 items-center justify-between pt-px pr-[6px] pl-1 text-xs">
        <h2>装配导航器</h2>
        <button type="button" aria-label="最大化" className="h-[11px] w-3 border border-t-2 border-black" />
      </header>
      <div className="flex min-h-0 flex-1 flex-col border border-[#cfcfcf]">
        <div className="flex h-[22px] shrink-0 items-center gap-[18px] border-b border-[#cfcfcf] bg-[#efefef] pl-[6px] text-xs">
          <span>描述性部件名</span>
          <svg viewBox="0 0 9 5" className="h-[5px] w-[9px]" aria-hidden="true">
            <path d="M0 5h9L4.500 0z" fill="#111" />
          </svg>
        </div>
        <ul className="flex min-h-0 flex-1 flex-col overflow-hidden">
          <li className={plain}>
            <svg viewBox="0 0 19 20" className="h-5 w-[19px] shrink-0" aria-hidden="true">
              <path d="M10.500 20v-9h8" fill="none" stroke="#999" strokeDasharray="1 1" />
            </svg>
            <svg viewBox="0 0 17 14" className="mt-1 h-[14px] w-[17px] shrink-0" aria-hidden="true">
              <path d="M1 12V3h5l2 2h6v3" fill="#e0a92e" stroke="#946a14" />
              <path d="M1 12l4-6h11l-4 6z" fill="#fbd865" stroke="#946a14" />
            </svg>
            <span className="pl-[3px]">截面</span>
          </li>
          <li className={tinted}>
            <svg viewBox="0 0 22 20" className="h-5 w-[22px] shrink-0" aria-hidden="true">
              <path d="M10.500 0v6M15 10.500h7" stroke="#999" strokeDasharray="1 1" />
              <path d="M6.500 6.500h8v8h-8z" fill="#fff" stroke="#c8c8c8" />
              <path d="M8 10.500h5" stroke="#222" />
            </svg>
            <RedCheck id="part-zp" label="zp" />
            <svg viewBox="0 0 18 18" className="mx-px h-[18px] w-[18px] shrink-0" aria-hidden="true">
              <Cube x={2} y={2} s={8} />
              <Cube x={2} y={9} s={7} />
              <Cube x={8} y={7} s={9} />
            </svg>
            <label htmlFor="part-zp" className="pl-px text-[11px] font-bold whitespace-pre">zp（顺序：时间顺序）</label>
          </li>
          <li className={plain}>
            <svg viewBox="0 0 39 20" className="h-5 w-[39px] shrink-0" aria-hidden="true">
              <path d="M29.500 0v20M34 10.500h5" stroke="#999" strokeDasharray="1 1" />
              <path d="M25.500 6.500h8v8h-8z" fill="#fff" stroke="#c8c8c8" />
              <path d="M27 10.500h5M29.500 8v5" stroke="#222" />
            </svg>
            <svg viewBox="0 0 16 16" className="h-4 w-4 shrink-0" aria-hidden="true">
              <path d="M3 1l4 3-4 3zM12 1L8 4l4 3z" fill="#1d25c8" />
              <path d="M7.500 0v16" stroke="#222" strokeDasharray="2 1" />
              <path d="M1 9.500h4.500v5H1z" fill="#f6e43c" stroke="#555" strokeWidth=".8" />
              <path d="M9 8v7h6z" fill="#d3221c" />
            </svg>
            <span className="pl-[3px]">约束</span>
          </li>
          {["zjj-1", "zjj-2", "zjj-3"].map((name, i) => (
            <li key={name} className={i === 1 ? plain : tinted}>
              <svg viewBox="0 0 41 20" className="h-5 w-[41px] shrink-0" aria-hidden="true">
                <path d={i === 2 ? "M29.500 0v10.500h9" : "M29.500 0v20M30 10.500h9"} fill="none" stroke="#999" strokeDasharray="1 1" />
              </svg>
              <RedCheck id={name} label={name} />
              <svg viewBox="0 0 16 16" className="ml-1 h-4 w-4 shrink-0" aria-hidden="true">
                <Cube x={1} y={2} s={12.5} />
              </svg>
              <label htmlFor={name} className="pl-px">{name}</label>
            </li>
          ))}
          {Array.from({ length: 60 }, (_, i) => (
            <li key={i} aria-hidden="true" className={i % 2 ? tinted : plain} />
          ))}
        </ul>
        <div className="flex h-4 shrink-0 items-center bg-[#f0f0f0]">
          <button type="button" aria-label="向左滚动" className="flex h-4 w-[18px] items-center justify-center">
            <svg viewBox="0 0 6 8" className="h-2 w-[6px]" aria-hidden="true"><path d="M5 0L1.500 4 5 8" fill="none" stroke="#333" strokeWidth="1.500" /></svg>
          </button>
          <div className="h-[15px] w-[63px] bg-[#cdcdcd]" />
          <button type="button" aria-label="向右滚动" className="ml-auto flex h-4 w-[18px] items-center justify-center">
            <svg viewBox="0 0 6 8" className="h-2 w-[6px]" aria-hidden="true"><path d="M1 0l3.500 4L1 8" fill="none" stroke="#333" strokeWidth="1.500" /></svg>
          </button>
        </div>
      </div>
      <div className="mt-px h-[5px] shrink-0 border border-[#aaa] bg-[#d8d8d8]" />
      {["预览", "相依性"].map((t) => (
        <button key={t} type="button" className="flex h-6 shrink-0 items-center justify-between border-b-2 border-[#cacaca] pt-[2px] pr-[5px] pl-[7px] text-sm text-[#2580b3]">
          <span>{t}</span>
          <svg viewBox="0 0 11 9" className="h-[9px] w-[11px]" aria-hidden="true"><path d="M1 .5L5.500 7.500 10 .5" fill="none" stroke="#2580b3" strokeWidth="2" /></svg>
        </button>
      ))}
      <div className="h-[6px] shrink-0" />
    </section>
  );
}

/* ---------- model view ---------- */

function ModelView() {
  return (
    <main className="min-w-0 flex-1 bg-linear-to-b from-[#b4b5b6] via-[#d7d8d9] to-[#e8eaec]" aria-label="模型视图">
      <svg viewBox="288 128 966 624" preserveAspectRatio="xMidYMid slice" className="h-full w-full" role="img" aria-label="指甲钳装配体">
        <defs>
          <linearGradient id="jaw" x1="0" y1="0" x2="1" y2="1">
            <stop offset="0" stopColor="#8fb6f4" />
            <stop offset=".5" stopColor="#a9d3ff" />
            <stop offset="1" stopColor="#6a94ee" />
          </linearGradient>
          <linearGradient id="scoop" x1="0" y1="0" x2="1" y2="1">
            <stop offset="0" stopColor="#55b4f2" />
            <stop offset=".35" stopColor="#4f9bea" />
            <stop offset=".7" stopColor="#a5dcff" />
            <stop offset="1" stopColor="#5cc4f6" />
          </linearGradient>
          <linearGradient id="post" x1="0" y1="0" x2="1" y2="0">
            <stop offset="0" stopColor="#9c8a42" />
            <stop offset=".6" stopColor="#c9b45c" />
            <stop offset="1" stopColor="#efd984" />
          </linearGradient>
          <linearGradient id="side" x1="0" y1="0" x2="1" y2="0">
            <stop offset="0" stopColor="#3590c4" />
            <stop offset=".4" stopColor="#3d8dc6" />
            <stop offset="1" stopColor="#4a86bb" />
          </linearGradient>
          <linearGradient id="ring" x1="0" y1="0" x2=".3" y2="1">
            <stop offset="0" stopColor="#93b9f0" />
            <stop offset=".4" stopColor="#7c9ee8" />
            <stop offset="1" stopColor="#7fabf0" />
          </linearGradient>
        </defs>

        {/* key ring */}
        <g fill="none">
          <ellipse cx="1006" cy="478.500" rx="61.500" ry="65.500" stroke="#6482bd" strokeWidth="7.500" />
          <ellipse cx="1006" cy="478.500" rx="61.500" ry="65.500" stroke="url(#ring)" strokeWidth="6" />
          <ellipse cx="1005.500" cy="478" rx="61.800" ry="65.500" stroke="#b4d6fb" strokeWidth="1.600" />
          <path d="M1060 469h6M1064 471.500h7" stroke="#333" strokeWidth="1.200" />
        </g>

        {/* lower blade */}
        <g stroke="#2c3440" strokeWidth="1" strokeLinejoin="round">
          <path d="M466 548L494 570 512 590Q696 546 989 500V507L986 510Q690 551 511 596L503 595 494 584C491 571 479 564 466 556z" fill="#6080bb" />
          <path d="M468 547L495 572 512 589Q696 545 988 500L900 490 520 540z" fill="#aee9ff" />
          <path d="M466 548C480 551 490 561 496 572L513 590 507 594 495 583C491 570 479 562 466 556z" fill="url(#jaw)" />
          <path d="M470 549C481 552 489 562 494 574L509 591" fill="none" />
          <path d="M513 592Q696 547 989 503M512 590v6M985 505v6" fill="none" />
        </g>

        {/* lower part of the post */}
        <path d="M510 554v14c4 6 23 6 27 0v-14z" fill="url(#post)" stroke="#7c6c30" strokeWidth=".7" />

        {/* upper blade */}
        <g stroke="#2c3440" strokeWidth="1" strokeLinejoin="round">
          <path d="M466 533V542C478 546 489 555 495 568L511 556H513Q745 543 989 503L991 488 700 520z" fill="#6383bb" />
          <path d="M466 533C472 523 481 518 490 517L535 516 630 506 700 498 847 479 942 464 952 463C964 462 976 469 983 475 990 480 991 484 991 491L988 497Q745 536 511 551L495 561C489 546 478 538 466 533z" fill="#aee9ff" />
          <path d="M466 533C472 523 481 518 490 517 500 523 508 538 511 551L495 562C489 546 478 538 466 533z" fill="url(#jaw)" />
          <path d="M476 524C487 531 496 544 501 557M511 551V556M985 498V504" fill="none" />
          <path d="M847 479L877 513" fill="none" />
          <path d="M618 517L757 501C770 499 783 504 786 509 787 514 782 517 776 518L637 533C625 534 610 529 610 524 610 520 613 518 618 517z" fill="#b2ebff" />
          <path d="M610 525C609 520 613 518 618 517L757 501C771 499 783 504 786 510" fill="none" stroke="#22383f" strokeWidth="2" />
        </g>

        {/* hole and the ring passing through it */}
        <ellipse cx="949" cy="483.500" rx="14.500" ry="6.500" fill="#7b99bd" stroke="#2c3440" />
        <path d="M943 488c3-6 14-6 18-3M947 489c3-3 9-3 13-2" fill="none" stroke="#2c3440" strokeWidth=".9" />
        <g fill="none">
          <path d="M944.500 488c-2-24 8-50 27-62" stroke="#6482bd" strokeWidth="7.500" />
          <path d="M944.500 488c-2-24 8-50 27-62" stroke="#7c9ee8" strokeWidth="6" />
          <path d="M944 488c-2-24 8-50 27-62" stroke="#b4d6fb" strokeWidth="1.600" />
        </g>

        {/* lever: side wall, then the top face */}
        <g stroke="#1f3c50" strokeWidth="1" strokeLinejoin="round">
          <path d="M497 517V522L507 527 512 531 517 537V543L522 546 565 543 700 463 958 313 975 304 981 298V288L560 530z" fill="url(#side)" />
          <path
            d="M498 517L500 515 520 514 538 512 945 267C949 265 954 265 959 267 972 271 980 280 980 290 980 294 978 296 974 299L700 457 565 538 522 541 517 537 518 533 524 531C526 528 532 528 536 531L543 531 540 520 514 526 513 523 508 521z"
            fill="#64cdf6"
          />
          <path d="M592 486L948 271C956 271 969 279 969 286V295L700 451 601 508C608 503 610 496 606 491 602 488 597 487 592 486z" fill="#6bd8ff" stroke="none" />
          <path d="M583 492L590 486 948 271C956 271 969 279 969 286" fill="none" />
          <path d="M969 286V295L700 451 600 508C607 503 610 495 605 491 599 488 591 489 584 492" fill="none" stroke="#123b48" strokeWidth="1.700" />
          <path d="M538 512L545 516C560 505 580 498 598 498 595 508 576 522 563 530L553 528M563 530L557 538M538 512L549 521M551 528L561 538M958 308V313M973 300L976 304M584 492C590 493 593 492 597 490" fill="none" />
          <path d="M552 521C566 511 583 503 596 500 590 510 574 522 560 528z" fill="url(#scoop)" stroke="none" />
          <path d="M540 520L551 518 552 521 541 525z" fill="#2f86ba" />
          <path d="M512 530L520 529 522 534 517 537z" fill="#2f6f96" />
        </g>

        {/* post cap */}
        <g stroke="#5c5528" strokeWidth=".9">
          <path d="M513 519V527C516 530 521 528 524 529 530 527 535 533 539 530V519z" fill="#dbc765" />
          <ellipse cx="526" cy="519" rx="13" ry="6.500" fill="#f0e98e" />
          <ellipse cx="526" cy="517.500" rx="10.500" ry="4.500" fill="#ffffb0" />
        </g>

        {/* work coordinate system */}
        <path d="M492 568V539H496V568z" fill="#3156d3" opacity=".8" />
        <path d="M490 541L494.500 529 498 541z" fill="#1c3fd0" />
        <path d="M477 543v9M480 556l14 14" stroke="#57a86a" strokeWidth="1.300" fill="none" opacity=".6" />
        <path d="M499 577L531 572 544 571 532 575z" fill="#e08f98" stroke="#d66" strokeWidth=".6" />
        <path d="M532 566v10" stroke="#d66" />
        <g fontFamily={sans} fontSize="12">
          <text x="477" y="527" fill="#1c3fd0">ZC</text>
          <text x="530" y="566" fill="#e0312b">XC</text>
        </g>

        {/* view triad */}
        <g>
          <path d="M333 670l20-4 8 7v18l-20 5-8-7z" fill="#cfd1d3" stroke="#aaa" opacity=".85" />
          <path d="M333 670l8 7v18M341 677l20-4M353 666v19l8 6M353 685l-20 4" fill="none" stroke="#aaa" />
          <path d="M340 696l-9-9" stroke="#2b9a45" strokeWidth="2" />
          <path d="M326 682l8 3-4 4z" fill="#2b9a45" />
          <path d="M344 697l22-4" stroke="#d3262c" strokeWidth="2" />
          <path d="M373 692l-9-3 1 6z" fill="#d3262c" />
          <path d="M341 695v-26" stroke="#1533c8" strokeWidth="3" />
          <path d="M337.500 673l3.500-9 3.500 9z" fill="#1533c8" />
          <circle cx="340" cy="697" r="4" fill="#b5b8ba" />
          <circle cx="339" cy="695.500" r="1.500" fill="#e6e8e9" />
          <g fontFamily={sans} fontSize="12">
            <text x="338" y="665" fill="#2c56e0">Z</text>
            <text x="321" y="684" fill="#2b9a45">Y</text>
            <text x="374" y="696" fill="#e0312b">X</text>
          </g>
        </g>
      </svg>
    </main>
  );
}

/* ---------- bottom bars ---------- */

function SketchBar() {
  return (
    <div className="flex h-[34px] overflow-hidden">
      <div className="flex items-center border-r border-b border-[#dcdcdc]" role="toolbar" aria-label="草图">
        <div className="relative -ml-px h-5 w-[95px] shrink-0">
          <select aria-label="草图名称" disabled className="block h-full w-full appearance-none border border-[#a8a8a8] bg-white text-xs">
            <option> </option>
          </select>
          <BoxArrow className="fill-[#8a8a8a]" />
        </div>
        <button type="button" disabled className="ml-[5px] flex w-[77px] shrink-0 items-center gap-px">
          <svg viewBox="0 0 28 28" className="h-7 w-7 shrink-0" aria-hidden="true">{LOWER.flag}</svg>
          <span className="text-[11px] whitespace-nowrap text-[#b0b0b0]">完成草图</span>
        </button>
        {items(LOWER, [
          ["profile", "轮廓"], ["line", "直线"], ["arc", "圆弧"], ["circle", "圆"], ["fillet", "圆角"], ["chamfer", "倒斜角"],
          ["rect", "矩形"], ["polygon", "多边形"], ["studio", "艺术样条"], ["point", "点"], ["offset", "偏置曲线"],
        ])}
        <Drop label="偏置曲线" />
        <Sep />
        {items(LOWER, [["trim", "快速修剪"], ["extend", "快速延伸"], ["corner", "制作拐角"]])}
        <Sep />
        {items(LOWER, [["constraints", "几何约束"], ["mirror", "设为对称"], ["autoConstrain", "自动约束"]])}
        <Drop label="自动约束" />
        <More />
      </div>
    </div>
  );
}

function AssemblyBar() {
  return (
    <div className="flex h-[34px] overflow-hidden">
      <div className="-ml-2 flex items-center border-r border-[#dcdcdc]" role="toolbar" aria-label="装配">
        <Tool icon={LOWER.findComponent} label="查找组件" />
        <Drop label="查找组件" />
        {items(LOWER, [["context", "显示产品轮廓"], ["windowGrey", "在窗口中打开"], ["addComponent", "添加组件"]])}
        <Drop label="添加组件" />
        <ThinSep />
        {items(LOWER, [["moveComponent", "移动组件"], ["cubes", "装配约束"]])}
        <ThinSep />
        <Tool icon={LOWER.treeInfo} label="关系浏览器" />
        <ThinSep />
        <Tool icon={LOWER.clearance} label="装配间隙" />
        <Drop label="装配间隙" />
        <More />
      </div>
    </div>
  );
}

export default function App() {
  return (
    <div className="flex h-screen flex-col overflow-hidden bg-[#fefefe] font-['Open_Sans','Noto_Sans_CJK_SC',sans-serif] text-[#222]">
      <StandardBar />
      <DrawingBar />
      <AnnotationBar />
      <SelectionBar />
      <div className="flex min-h-0 flex-1">
        <Rail />
        <Navigator />
        <ModelView />
      </div>
      <SketchBar />
      <AssemblyBar />
      <footer className="flex h-[9px] shrink-0 items-start justify-between overflow-hidden border-t border-[#a0a0a0] pr-2">
        <p className="-ml-[3px] pt-px text-[11px] leading-4 font-bold whitespace-nowrap text-[#111]">择对象并使用 MB3，或双击，或按住并拖动来移动视图、尺寸或注释</p>
        <svg viewBox="0 0 30 8" className="h-2 w-[30px] shrink-0" aria-hidden="true">
          <path d="M1.500 2.500h14v6h-14z" fill="#e8e8e8" stroke="#aaa" />
          <path d="M3 5h3M8 5h5M4 7h8M21.500 8V2.500H25M25 6h5" fill="none" stroke="#888" />
        </svg>
      </footer>
    </div>
  );
}
